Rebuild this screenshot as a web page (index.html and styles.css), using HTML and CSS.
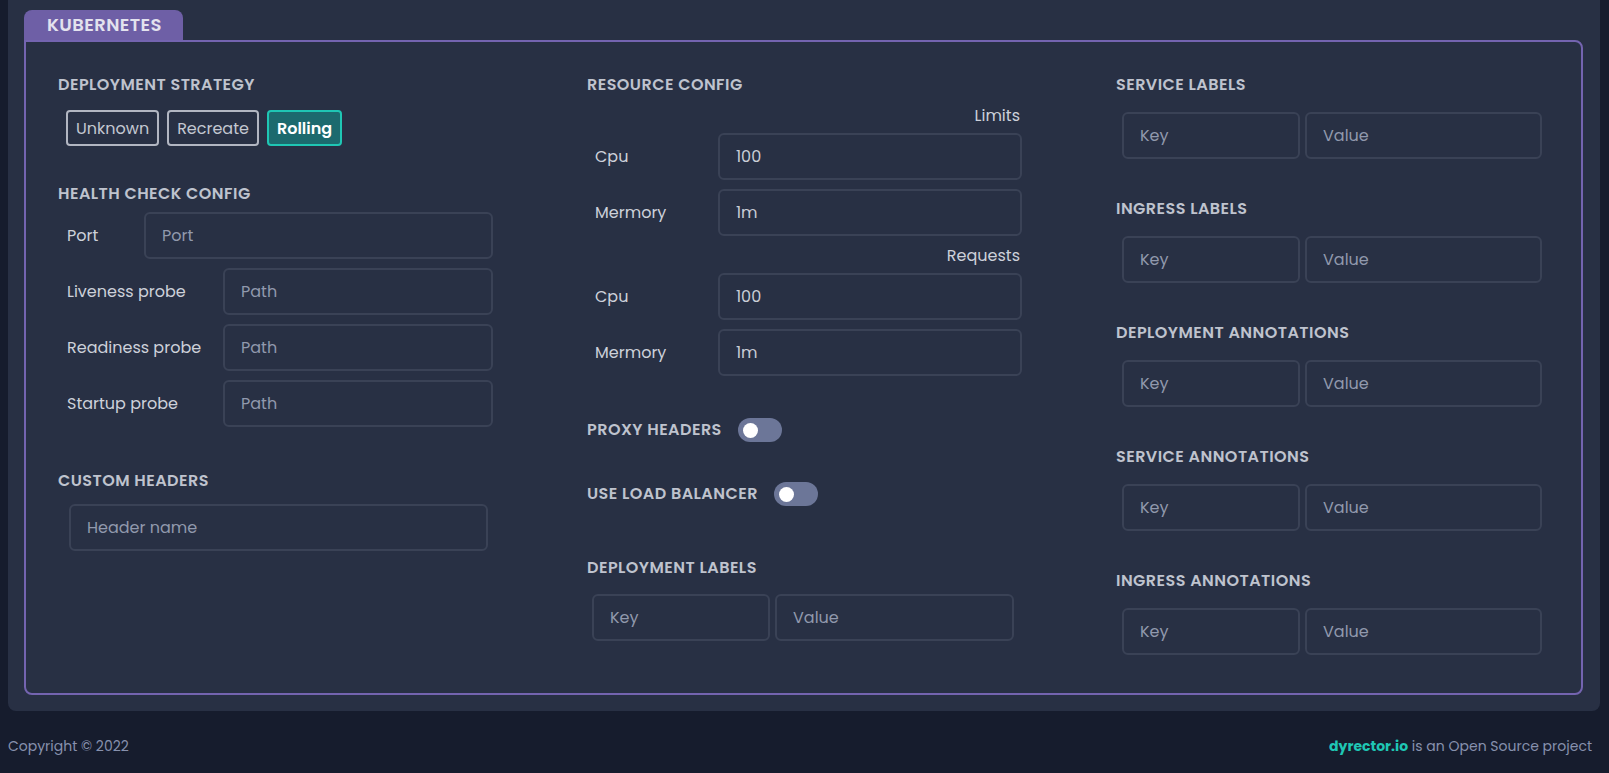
FILE: index.html
```html
<!DOCTYPE html>
<html lang="en">
<head>
<meta charset="utf-8">
<title>Kubernetes config</title>
<link rel="stylesheet" href="styles.css">
</head>
<body>
<div class="card">
  <div class="tab">KUBERNETES</div>
  <div class="box">
    <div class="col col-left">
      <h3 class="heading">DEPLOYMENT STRATEGY</h3>
      <div class="strategy">
        <button class="chip">Unknown</button>
        <button class="chip">Recreate</button>
        <button class="chip chip-active">Rolling</button>
      </div>

      <h3 class="heading heading-health">HEALTH CHECK CONFIG</h3>
      <div class="field-row">
        <span class="label label-port">Port</span>
        <input class="input" placeholder="Port">
      </div>
      <div class="field-row">
        <span class="label label-probe">Liveness probe</span>
        <input class="input" placeholder="Path">
      </div>
      <div class="field-row">
        <span class="label label-probe">Readiness probe</span>
        <input class="input" placeholder="Path">
      </div>
      <div class="field-row">
        <span class="label label-probe">Startup probe</span>
        <input class="input" placeholder="Path">
      </div>

      <h3 class="heading heading-custom">CUSTOM HEADERS</h3>
      <input class="input input-header" placeholder="Header name">
    </div>

    <div class="col col-mid">
      <h3 class="heading">RESOURCE CONFIG</h3>
      <div class="sub">Limits</div>
      <div class="field-row res-row">
        <span class="label label-res">Cpu</span>
        <input class="input" value="100">
      </div>
      <div class="field-row res-row">
        <span class="label label-res">Mermory</span>
        <input class="input" value="1m">
      </div>
      <div class="sub sub-req">Requests</div>
      <div class="field-row res-row">
        <span class="label label-res">Cpu</span>
        <input class="input" value="100">
      </div>
      <div class="field-row res-row">
        <span class="label label-res">Mermory</span>
        <input class="input" value="1m">
      </div>

      <div class="toggle-row toggle-proxy">
        <h3 class="heading">PROXY HEADERS</h3>
        <span class="toggle"><span class="knob"></span></span>
      </div>
      <div class="toggle-row toggle-lb">
        <h3 class="heading">USE LOAD BALANCER</h3>
        <span class="toggle"><span class="knob"></span></span>
      </div>

      <h3 class="heading heading-deplabels">DEPLOYMENT LABELS</h3>
      <div class="kv kv-mid">
        <input class="input key" placeholder="Key">
        <input class="input value" placeholder="Value">
      </div>
    </div>

    <div class="col col-right">
      <section class="kv-section">
        <h3 class="heading">SERVICE LABELS</h3>
        <div class="kv">
          <input class="input key" placeholder="Key">
          <input class="input value" placeholder="Value">
        </div>
      </section>
      <section class="kv-section">
        <h3 class="heading">INGRESS LABELS</h3>
        <div class="kv">
          <input class="input key" placeholder="Key">
          <input class="input value" placeholder="Value">
        </div>
      </section>
      <section class="kv-section">
        <h3 class="heading">DEPLOYMENT ANNOTATIONS</h3>
        <div class="kv">
          <input class="input key" placeholder="Key">
          <input class="input value" placeholder="Value">
        </div>
      </section>
      <section class="kv-section">
        <h3 class="heading">SERVICE ANNOTATIONS</h3>
        <div class="kv">
          <input class="input key" placeholder="Key">
          <input class="input value" placeholder="Value">
        </div>
      </section>
      <section class="kv-section">
        <h3 class="heading">INGRESS ANNOTATIONS</h3>
        <div class="kv">
          <input class="input key" placeholder="Key">
          <input class="input value" placeholder="Value">
        </div>
      </section>
    </div>
  </div>
</div>
<footer class="footer">
  <span class="copy">Copyright © 2022</span>
  <span class="oss"><strong class="brand">dyrector.io</strong> is an Open Source project</span>
</footer>
</body>
</html>
```

FILE: styles.css
```css
* { box-sizing: border-box; }

html, body {
  margin: 0;
  padding: 0;
}

body {
  background: #161c2d;
  font-family: "Poppins", Inter, "Noto Sans", sans-serif;
  color: #c9cdd6;
  width: 1609px;
  height: 773px;
  overflow: hidden;
}

.card {
  margin: 0 9px 0 8px;
  background: #283044;
  border-radius: 0 0 8px 8px;
  padding: 10px 17px 16px 16px;
}

.tab {
  width: 159px;
  height: 30px;
  background: #6e5fa6;
  border-radius: 8px 8px 0 0;
  color: #e3e2ee;
  font-weight: 600;
  font-size: 18px;
  line-height: 30px;
  padding-left: 23px;
  letter-spacing: 0.4px;
}

.box {
  border: 2px solid #7464b0;
  border-radius: 0 8px 8px 8px;
  height: 655px;
  padding: 33px 38px 0 32px;
  display: grid;
  grid-template-columns: 435px 435px 1fr;
  column-gap: 94px;
  align-items: start;
}

.heading {
  margin: 0;
  font-size: 16px;
  line-height: 20px;
  font-weight: 600;
  color: #bfc3ce;
  letter-spacing: 0.45px;
}

.strategy {
  display: flex;
  gap: 8px;
  margin: 15px 0 0 8px;
}

.chip {
  height: 36px;
  padding: 0 8px;
  border: 2px solid #b2b6c2;
  border-radius: 4px;
  background: transparent;
  color: #c3c7d1;
  font-family: inherit;
  font-size: 16px;
}

.chip-active {
  background: #1c6a6e;
  border-color: #1fc6b4;
  color: #ffffff;
  font-weight: 600;
}

.heading-health { margin-top: 38px; }

.field-row {
  display: flex;
  align-items: center;
  padding-left: 9px;
  margin-top: 9px;
}

.heading-health + .field-row { margin-top: 8px; }

.label {
  flex: none;
  font-size: 16px;
  color: #cdd1da;
}

.label-port { width: 77px; }
.label-probe { width: 156px; }
.label-res { width: 123px; }

.input {
  flex: 1;
  min-width: 0;
  height: 47px;
  border: 2px solid #3a4256;
  border-radius: 6px;
  background: transparent;
  padding: 0 16px;
  font-family: inherit;
  font-size: 16px;
  color: #c9cdd6;
  outline: none;
}

.input::placeholder { color: #9199ad; }

.heading-custom { margin-top: 44px; }

.input-header {
  display: block;
  width: 419px;
  margin: 13px 0 0 11px;
}

.sub {
  text-align: right;
  font-size: 16px;
  line-height: 22px;
  margin-top: 10px;
  color: #cdd1da;
  padding-right: 2px;
}

.sub-req { margin-top: 9px; }

.res-row { padding-left: 8px; }
.sub + .res-row { margin-top: 6px; }

.toggle-row {
  display: flex;
  align-items: center;
  gap: 16px;
}

.toggle-proxy { margin-top: 42px; }
.toggle-lb { margin-top: 40px; }

.toggle {
  width: 44px;
  height: 24px;
  border-radius: 12px;
  background: #6c7698;
  display: flex;
  align-items: center;
  padding-left: 5px;
}

.knob {
  width: 15px;
  height: 15px;
  border-radius: 50%;
  background: #ffffff;
}

.heading-deplabels { margin-top: 52px; }

.kv {
  display: flex;
  gap: 5px;
  margin: 17px 0 0 5px;
}

.kv-mid { margin-top: 16px; }

.kv .key { flex: none; width: 178px; }
.kv .value { flex: none; width: 239px; }

.col-right .kv { margin-left: 6px; }
.col-right .kv .value { width: 237px; }

.kv-section + .kv-section { margin-top: 40px; }

.footer {
  display: flex;
  justify-content: space-between;
  align-items: center;
  padding: 10px 17px 0 8px;
  height: 61px;
  font-size: 14px;
  color: #8791ad;
}

.brand {
  color: #1fc6b4;
  font-weight: 700;
}
```
